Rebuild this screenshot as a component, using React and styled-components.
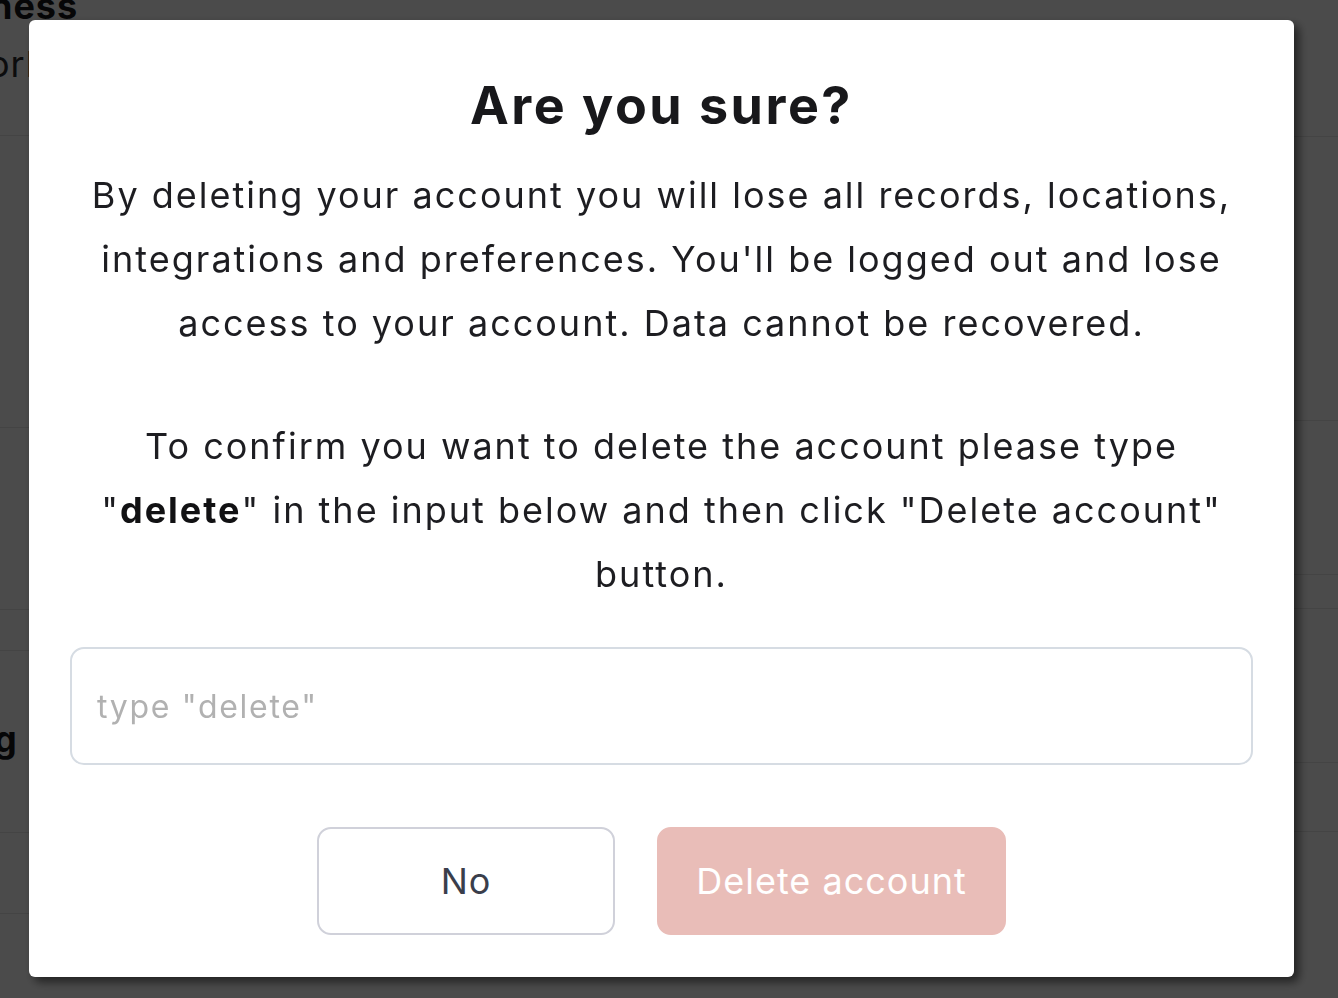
import React from "react";
import styled, { createGlobalStyle } from "styled-components";

const Global = createGlobalStyle`
  html, body { margin: 0; padding: 0; background: #ffffff; }
  body { font-family: Inter, "Noto Sans", "Liberation Sans", sans-serif; overflow: hidden; }
  * { box-sizing: border-box; }
`;

const Page = styled.div`
  width: 1338px;
  height: 998px;
  display: grid;
  grid-template-columns: 120px 1fr 120px;
  overflow: hidden;
  color: #161618;
`;

const Column = styled.div`
  display: flex;
  flex-direction: column;
  align-items: ${(p) => (p.$end ? "flex-end" : "flex-start")};
  overflow: hidden;
`;

const Row = styled.div`
  width: 100%;
  height: ${(p) => p.$h}px;
  flex: none;
  border-bottom: 1px solid #e6e6e6;
  display: flex;
  flex-direction: column;
  ${(p) => (p.$last ? "border-bottom: none; flex: 1;" : "")}
`;

const BgHeading = styled.div`
  font-size: 36px;
  font-weight: 700;
  line-height: 1;
  margin-top: ${(p) => p.$mt || 0}px;
  margin-left: ${(p) => p.$ml || 0}px;
  letter-spacing: 1px;
  white-space: nowrap;
`;

const BgText = styled.div`
  font-size: 36px;
  font-weight: 400;
  line-height: 1;
  margin-top: ${(p) => p.$mt || 0}px;
  margin-left: ${(p) => p.$ml || 0}px;
  letter-spacing: 1px;
  white-space: nowrap;
  color: #2a2a2e;
`;

const Overlay = styled.div`
  position: fixed;
  inset: 0;
  background: rgba(0, 0, 0, 0.705);
  padding: 20px 0 0 29px;
  display: flex;
  align-items: flex-start;
`;

const Modal = styled.div`
  width: 1265px;
  height: 957px;
  background: #ffffff;
  border-radius: 6px;
  box-shadow: 5px 5px 10px rgba(0, 0, 0, 0.55);
  padding: 55px 41px 41px;
  display: flex;
  flex-direction: column;
  align-items: stretch;
  text-align: center;
`;

const Title = styled.h2`
  margin: 0;
  font-size: 52px;
  line-height: 62px;
  font-weight: 700;
  color: #18181b;
  letter-spacing: 2.5px;
`;

const Paragraph = styled.p`
  margin: ${(p) => p.$mt}px 0 0;
  font-size: 36px;
  line-height: 64px;
  font-weight: 400;
  color: #1d1d21;
  letter-spacing: 2px;
  b { font-weight: 700; color: #111113; }
`;

const Input = styled.input`
  margin-top: 41px;
  width: 100%;
  height: 118px;
  flex: none;
  border: 2px solid #d6dce3;
  border-radius: 14px;
  padding: 0 25px;
  font-family: inherit;
  font-size: 32px;
  letter-spacing: 1.7px;
  color: #1d1d21;
  outline: none;
  &::placeholder { color: #b1b1b1; }
`;

const Actions = styled.div`
  margin-top: 62px;
  display: flex;
  justify-content: center;
  gap: 42px;
`;

const Button = styled.button`
  height: 108px;
  width: ${(p) => p.$w}px;
  border-radius: 14px;
  font-family: inherit;
  font-size: 36px;
  font-weight: 400;
  letter-spacing: 1px;
  cursor: pointer;
  border: 2px solid ${(p) => (p.$danger ? "#e9bdb8" : "#d0d1da")};
  background: ${(p) => (p.$danger ? "#e9bdb8" : "#ffffff")};
  color: ${(p) => (p.$danger ? "#ffffff" : "#3a3e4b")};
`;

export default function App() {
  return (
    <>
      <Global />
      <Page>
        <Column>
          <Row $h={136}>
            <BgHeading $mt={-12} $ml={-10}>ness</BgHeading>
            <BgText $mt={22} $ml={-12}>ork</BgText>
          </Row>
          <Row $h={292} />
          <Row $h={182} />
          <Row $h={41} />
          <Row $h={182}>
            <BgHeading $mt={70} $ml={-6}>g</BgHeading>
          </Row>
          <Row $h={81} />
          <Row $last />
        </Column>
        <div />
        <Column $end>
          <Row $h={137} />
          <Row $h={284} />
          <Row $h={154} />
          <Row $h={34} />
          <Row $h={154} />
          <Row $h={69} />
          <Row $last />
        </Column>
      </Page>
      <Overlay>
        <Modal role="dialog" aria-modal="true">
          <Title>Are you sure?</Title>
          <Paragraph $mt={26}>
            By deleting your account you will lose all records, locations,
            integrations and preferences. You'll be logged out and lose access
            to your account. Data cannot be recovered.
          </Paragraph>
          <Paragraph $mt={59}>
            To confirm you want to delete the account please type "<b>delete</b>"
            in the input below and then click "Delete account" button.
          </Paragraph>
          <Input placeholder='type "delete"' />
          <Actions>
            <Button $w={298}>No</Button>
            <Button $w={349} $danger>
              Delete account
            </Button>
          </Actions>
        </Modal>
      </Overlay>
    </>
  );
}
